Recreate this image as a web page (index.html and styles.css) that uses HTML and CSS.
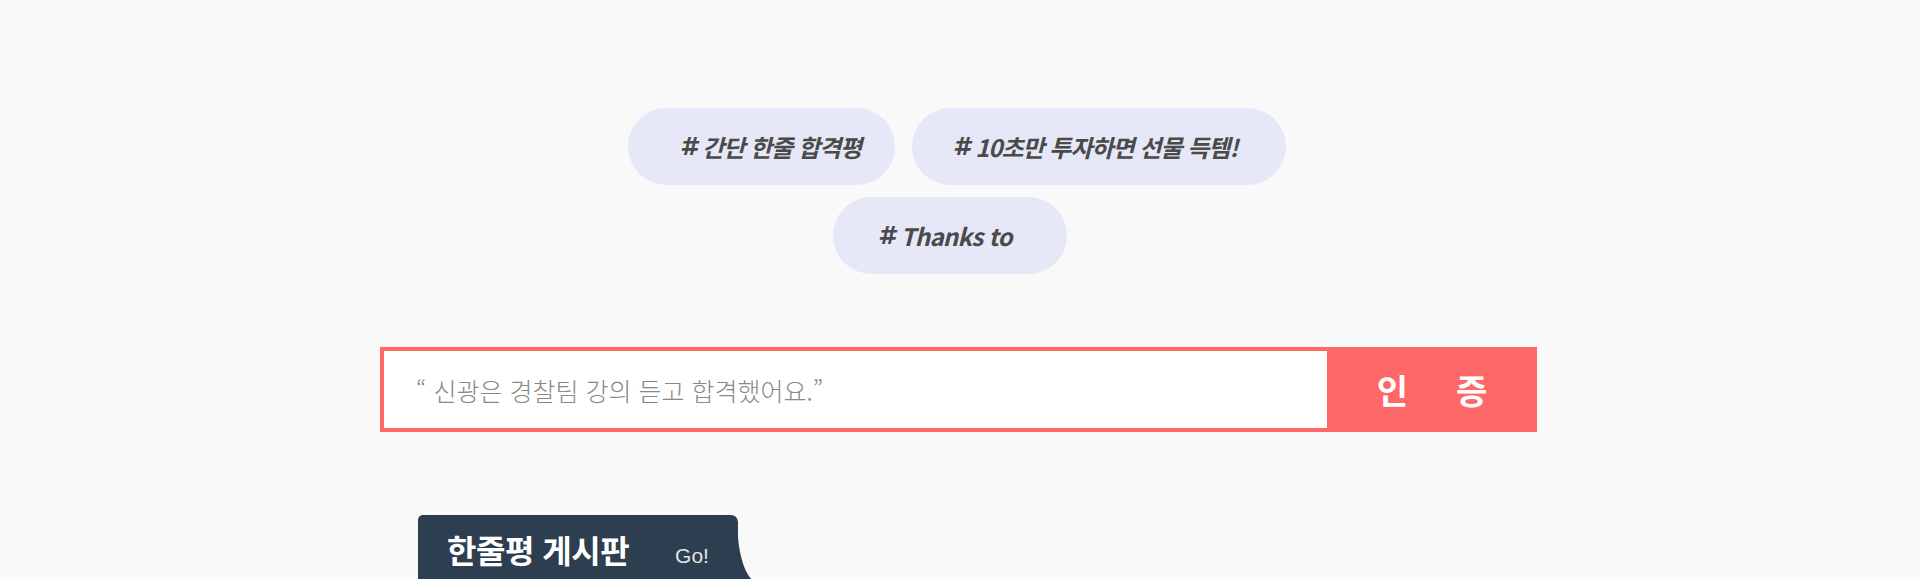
FILE: index.html
```html
<!DOCTYPE html>
<html lang="ko">
<head>
<meta charset="utf-8">
<title>한줄평</title>
<link rel="stylesheet" href="styles.css">
</head>
<body>
<main class="page">
  <section class="tags">
    <div class="tag-row">
      <a class="tag tag--simple" href="#"><span class="hash">#</span> 간단 한줄 합격평</a>
      <a class="tag tag--gift" href="#"><span class="hash">#</span> 10초만 투자하면 선물 득템!</a>
    </div>
    <div class="tag-row tag-row--second">
      <a class="tag tag--thanks" href="#"><span class="hash">#</span> Thanks to</a>
    </div>
  </section>

  <form class="cert">
    <div class="cert-input">“ 신광은 경찰팀 강의 듣고 합격했어요.”</div>
    <button class="cert-btn" type="button"><span>인</span><span>증</span></button>
  </form>

  <section class="board">
    <div class="board-tab">
      <h2 class="board-title">한줄평 게시판</h2>
      <span class="board-go">Go!</span>
    </div>
  </section>
</main>
</body>
</html>
```

FILE: styles.css
```css
* { box-sizing: border-box; }

html, body {
  margin: 0;
  padding: 0;
  background: #f9f9f9;
  font-family: "Noto Sans CJK KR", "Noto Sans", sans-serif;
}

.page {
  height: 579px;
  overflow: hidden;
}

.tags {
  padding-top: 108px;
  display: flex;
  flex-direction: column;
  align-items: center;
  gap: 12px;
}

.tag-row {
  display: flex;
  gap: 17px;
  padding-right: 6px;
}

.tag-row--second {
  padding-right: 20px;
}

.tag {
  display: flex;
  align-items: center;
  height: 77px;
  border-radius: 39px;
  background: #e6e7f7;
  color: #4a4a4a;
  font-size: 24px;
  font-weight: 700;
  font-style: italic;
  letter-spacing: -1px;
  text-decoration: none;
  white-space: pre;
}

.hash {
  font-family: "DejaVu Sans", sans-serif;
  font-size: 25px;
  font-weight: 700;
  letter-spacing: -1px;
}

.tag--simple { width: 267px; padding-left: 52px; }
.tag--gift { width: 374px; padding-left: 41px; }
.tag--thanks { width: 234px; padding-left: 45px; letter-spacing: -0.7px; }

.cert {
  width: 1157px;
  height: 85px;
  margin: 73px 0 0 380px;
  display: flex;
}

.cert-input {
  flex: 1;
  display: flex;
  align-items: center;
  padding-left: 32px;
  background: #fff;
  border: 4px solid #ff6868;
  border-right: none;
  color: #888;
  font-size: 25px;
  font-weight: 300;
}

.cert-btn {
  width: 210px;
  border: none;
  margin: 0;
  padding: 0;
  background: #ff6868;
  color: #fff;
  font-family: inherit;
  font-size: 34px;
  font-weight: 700;
  display: flex;
  align-items: center;
  justify-content: center;
  gap: 48px;
}

.board {
  margin: 83px 0 0 418px;
}

.board-tab {
  position: relative;
  width: 320px;
  height: 65px;
  background: #2c3e50;
  border-radius: 5px 7px 0 0;
  display: flex;
  align-items: baseline;
  padding: 12px 0 0 29px;
}

.board-tab::after {
  content: "";
  position: absolute;
  right: -14px;
  bottom: 0;
  width: 14px;
  height: 42px;
  background: #2c3e50;
  clip-path: path("M0 0 Q 3 30 14 42 L0 42 Z");
}

.board-title {
  margin: 0;
  color: #fff;
  font-size: 32px;
  font-weight: 700;
  line-height: 44px;
  letter-spacing: -0.5px;
}

.board-go {
  margin-left: 46px;
  color: #e2e4e8;
  font-family: "Liberation Sans", Arial, sans-serif;
  font-size: 21px;
}
```
